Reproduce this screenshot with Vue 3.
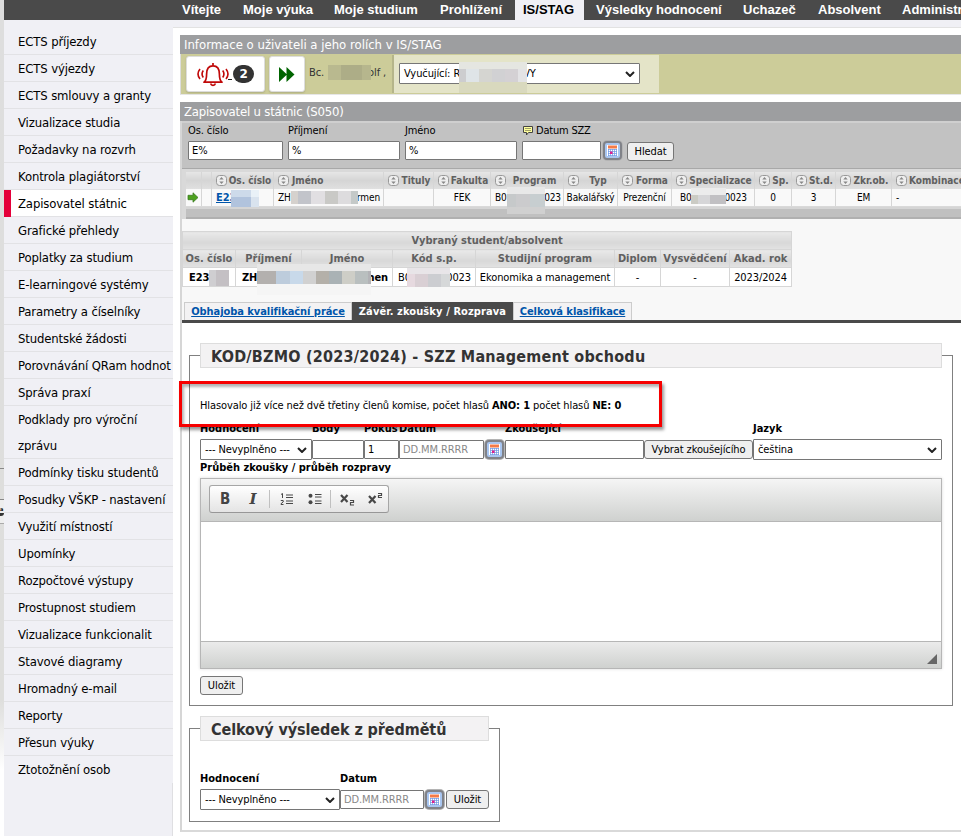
<script setup>
const nav = ['Vítejte', 'Moje výuka', 'Moje studium', 'Prohlížení', 'IS/STAG', 'Výsledky hodnocení', 'Uchazeč', 'Absolvent', 'Administrace']
const side = [
  'ECTS příjezdy', 'ECTS výjezdy', 'ECTS smlouvy a granty', 'Vizualizace studia', 'Požadavky na rozvrh',
  'Kontrola plagiátorství', 'Zapisovatel státnic', 'Grafické přehledy', 'Poplatky za studium', 'E-learningové systémy',
  'Parametry a číselníky', 'Studentské žádosti', 'Porovnávání QRam hodnot', 'Správa praxí', 'Podklady pro výroční zprávu',
  'Podmínky tisku studentů', 'Posudky VŠKP - nastavení', 'Využití místností', 'Upomínky', 'Rozpočtové výstupy',
  'Prostupnost studiem', 'Vizualizace funkcionalit', 'Stavové diagramy', 'Hromadný e-mail', 'Reporty', 'Přesun výuky', 'Ztotožnění osob'
]
const columns = ['Os. číslo', 'Jméno', 'Tituly', 'Fakulta', 'Program', 'Typ', 'Forma', 'Specializace', 'Sp.', 'St.d.', 'Zkr.ob.', 'Kombinace']
</script>

<template>
  <div class="page">
    <div class="behind"><i class="seam one"></i><i class="seam two"></i><div class="knob">a</div></div>
    <nav class="top">
      <a v-for="n in nav" :key="n" :class="{ on: n === 'IS/STAG' }">{{ n }}</a>
    </nav>
    <aside class="side">
      <a v-for="s in side" :key="s" :class="{ sel: s === 'Zapisovatel státnic' }">{{ s }}</a>
      <div class="rest"></div>
    </aside>

    <main class="main">
      <div class="strip"></div>
      <div class="content">
        <h2 class="bar first">Informace o uživateli a jeho rolích v IS/STAG</h2>
        <div class="user">
          <div class="tile bell">
            <svg width="34" height="26" viewBox="0 0 34 26" fill="none" stroke="#c00808" stroke-width="1.7">
              <path d="M8 21.2c2.2-1.5 2.6-4 2.6-8.2 0-5 2.3-8.2 6.400-8.200s6.400 3.200 6.400 8.200c0 4.200.4 6.700 2.600 8.200z" stroke-linejoin="round" />
              <path d="M17 4.500V2M14.600 22.500a2.500 2.500 0 0 0 4.800 0" />
              <path d="M7.300 9.500c-1.500 2.100-1.500 4.900 0 7M4 8c-2.400 3-2.400 7 0 10M26.700 9.500c1.500 2.100 1.500 4.900 0 7M30 8c2.400 3 2.400 7 0 10" stroke-width="1.600" />
            </svg>
            <u></u><b class="count">2</b>
          </div>
          <div class="tile ff">
            <svg width="16" height="15" viewBox="0 0 16 15" fill="#006400"><path d="M0 0l8 7.500L0 15zM7.500 0l8 7.500-8 7.500z" /></svg>
          </div>
          <span class="who"><span>Bc.</span><span>olf ,</span></span>
          <div class="role">
            <div class="select"><span>Vyučující: R</span><span class="tail">VY</span><svg class="chev" viewBox="0 0 10 6"><path d="M1 1l4 4 4-4" /></svg></div>
          </div>
        </div>
        <h2 class="bar second">Zapisovatel u státnic (S050)</h2>

        <section class="panel">
          <div class="search">
            <label class="q1"><span>Os. číslo</span><input value="E%"></label>
            <label class="q2"><span>Příjmení</span><input value="%"></label>
            <label class="q2"><span>Jméno</span><input value="%"></label>
            <label class="q3"><span class="tip"><svg width="11" height="10" viewBox="0 0 11 10"><path d="M.5.500h9v6h-4l-2 2.500v-2.500h-3z" fill="#ffff9c" stroke="#444" /><path d="M2 2.500h6M2 4.500h6" stroke="#88885a" stroke-width=".8" /></svg>Datum SZZ</span><input></label>
            <div class="cal"><svg viewBox="0 0 15 15"><path d="M2 2h11v11H2z" fill="#fff" /><path d="M3 2.500h9v3H3z" fill="#f47a48" /><path d="M3 6.500h9M3 8.500h9M3 10.500h9M3 12.500h9M3.500 6v7M5.500 6v7M7.500 6v7M9.500 6v7M11.500 6v7" stroke="#6b96e4" stroke-width=".7" /><path d="M5 8.500h2.500V11H5z" fill="#e0208c" /></svg></div>
            <button>Hledat</button>
          </div>
          <div class="results">
            <div class="grid head">
              <div></div><div></div>
              <div v-for="c in columns" :key="c"><svg class="sort" viewBox="0 0 11 11"><rect x=".5" y=".5" width="10" height="10" rx="3" /><path d="M5.500 2l2.200 2.600H3.300zM5.500 9L3.300 6.400h4.400z" /></svg><span>{{ c }}</span></div>
            </div>
            <div class="grid row">
              <div class="go"><svg width="12" height="11" viewBox="0 0 12 11"><path d="M1 3.300h5V.8l5 4.700-5 4.700V7.700H1z" fill="#4da11f" stroke="#3b7b22" stroke-width=".8" /></svg></div>
              <div></div>
              <div class="link"><a>E23</a></div>
              <div class="split"><span>ZH</span><span>rmen</span></div>
              <div></div>
              <div class="mid">FEK</div>
              <div class="split prog"><span>B0</span><span>023</span></div>
              <div class="mid">Bakalářský</div>
              <div class="mid">Prezenční</div>
              <div class="split spec"><span>B0</span><span>0023</span></div>
              <div class="mid">0</div>
              <div class="mid">3</div>
              <div class="mid">EM</div>
              <div>-</div>
            </div>
            <div class="foot"></div>
          </div>

          <div class="chosen">
            <table>
              <colgroup><col class="a"><col class="b"><col class="c"><col class="d"><col class="e"><col class="f"><col class="g"><col class="h"></colgroup>
              <tbody>
                <tr><th colspan="8">Vybraný student/absolvent</th></tr>
                <tr class="names"><th>Os. číslo</th><th>Příjmení</th><th>Jméno</th><th>Kód s.p.</th><th>Studijní program</th><th>Diplom</th><th>Vysvědčení</th><th>Akad. rok</th></tr>
                <tr class="vals"><td class="l"><b>E23</b></td><td class="l"><b>ZH.</b></td><td class="r"><b>men</b></td><td><div class="split"><span>B0</span><span>0023</span></div></td><td>Ekonomika a management</td><td>-</td><td>-</td><td>2023/2024</td></tr>
              </tbody>
            </table>
            <div class="tabs">
              <a class="t1"><span>Obhajoba kvalifikační práce</span></a><a class="t2 active">Závěr. zkoušky / Rozprava</a><a class="t3"><span>Celková klasifikace</span></a>
            </div>
          </div>

          <div class="work">
            <section class="box exam">
              <h3>KOD/BZMO (2023/2024) - SZZ Management obchodu</h3>
              <p class="vote">Hlasovalo již více než dvě třetiny členů komise, počet hlasů <b>ANO: 1</b> počet hlasů <b>NE: 0</b></p>
              <div class="fields">
                <b>Hodnocení</b><b>Body</b><b>Pokus</b><b>Datum</b><b></b><b>Zkoušející</b><b></b><b>Jazyk</b>
                <div class="select"><span>--- Nevyplněno ---</span><svg class="chev" viewBox="0 0 10 6"><path d="M1 1l4 4 4-4" /></svg></div>
                <input><input value="1"><input placeholder="DD.MM.RRRR">
                <div class="cal"><svg viewBox="0 0 15 15"><path d="M2 2h11v11H2z" fill="#fff" /><path d="M3 2.500h9v3H3z" fill="#f47a48" /><path d="M3 6.500h9M3 8.500h9M3 10.500h9M3 12.500h9M3.500 6v7M5.500 6v7M7.500 6v7M9.500 6v7M11.500 6v7" stroke="#6b96e4" stroke-width=".7" /><path d="M5 8.500h2.500V11H5z" fill="#e0208c" /></svg></div>
                <input><button>Vybrat zkoušejícího</button>
                <div class="select"><span>čeština</span><svg class="chev" viewBox="0 0 10 6"><path d="M1 1l4 4 4-4" /></svg></div>
              </div>
              <b class="course">Průběh zkoušky / průběh rozpravy</b>
              <div class="editor">
                <div class="tools">
                  <div class="group">
                    <span class="tb">B</span><span class="tb it">I</span><i></i>
                    <svg class="ic" width="14" height="14" viewBox="0 0 14 14"><path d="M6 3h7M6 5.500h7M6 9h7M6 11.500h7" stroke="#484848" stroke-width="1.200" /><path d="M1 2.500l1.500-1V6M.8 8.500h2.400V10L1 11.700v.8h2.500" fill="none" stroke="#484848" /></svg>
                    <svg class="ic" width="14" height="14" viewBox="0 0 14 14"><path d="M7 2.500h6.500M7 5h6.500M7 9h6.500M7 11.500h6.500" stroke="#484848" stroke-width="1.200" /><circle cx="2.500" cy="3.700" r="2" fill="#484848" /><circle cx="2.500" cy="10.300" r="2" fill="#484848" /></svg><i></i>
                    <svg class="ic" width="15" height="14" viewBox="0 0 15 14" fill="none" stroke="#484848"><path d="M1 3l6.500 7M7.500 3L1 10" stroke-width="2.200" /><path d="M10 8.500h3.500v2H10.500v2.500H14" stroke-width="1.200" /></svg>
                    <svg class="ic" width="15" height="14" viewBox="0 0 15 14" fill="none" stroke="#484848"><path d="M1 4l6.500 7M7.500 4L1 11" stroke-width="2.200" /><path d="M10 1.500h3.500v2H10.500v2H14" stroke-width="1.200" /></svg>
                  </div>
                </div>
                <div class="canvas"></div>
                <div class="status"></div>
              </div>
              <button class="save">Uložit</button>
            </section>

            <section class="box total">
              <h3>Celkový výsledek z předmětů</h3>
              <div class="fields2">
                <b>Hodnocení</b><b>Datum</b><b></b><b></b>
                <div class="select"><span>--- Nevyplněno ---</span><svg class="chev" viewBox="0 0 10 6"><path d="M1 1l4 4 4-4" /></svg></div>
                <input placeholder="DD.MM.RRRR">
                <div class="cal"><svg viewBox="0 0 15 15"><path d="M2 2h11v11H2z" fill="#fff" /><path d="M3 2.500h9v3H3z" fill="#f47a48" /><path d="M3 6.500h9M3 8.500h9M3 10.500h9M3 12.500h9M3.500 6v7M5.500 6v7M7.500 6v7M9.500 6v7M11.500 6v7" stroke="#6b96e4" stroke-width=".7" /><path d="M5 8.500h2.500V11H5z" fill="#e0208c" /></svg></div>
                <button>Uložit</button>
              </div>
            </section>
          </div>
        </section>
      </div>
    </main>

    <div class="mark"></div>
    <i class="mask m1"></i><i class="mask m2"></i><i class="mask m3"></i><i class="mask m4"></i><i class="mask m5"></i>
    <i class="mask m6"></i><i class="mask m7"></i><i class="mask m8"></i><i class="mask m9"></i>
  </div>
</template>

<style>
html, body { overflow: hidden; background: #fff; }
</style>

<style scoped>
* { box-sizing: border-box; }
.page {
  position: relative; width: 961px; height: 836px; overflow: hidden; background: #fff; color: #000;
  display: grid; grid-template-columns: 4px 169px 788px; grid-template-rows: 20px 816px;
  font: 11px/14px "DejaVu Sans Condensed", "DejaVu Sans", sans-serif; font-stretch: condensed; letter-spacing: -.1px;
}
.behind { grid-row: 1 / 3; background: linear-gradient(#dedede, #dededc 700px, #fff 770px); display: flex; flex-direction: column; overflow: hidden; }
.seam { height: 1px; background: #888; margin-top: 468px; flex: none; }
.seam.two { margin-top: 30px; }
.knob { width: 4px; height: 24px; background: #eee; border-bottom: 1px solid #aaa; font: bold 5px/8px "DejaVu Sans"; padding-top: 5px; }
.knob::after { content: ""; display: block; width: 4px; height: 3px; background: #333; border-radius: 0 0 3px 0; }

.top { grid-column: 2 / 4; background: #4a4a4a; padding-left: 170px; display: grid; grid-template-columns: 61px 91px 106px 83px 73px 147px 75px 84px 120px; font: bold 13px/20px "Liberation Sans", sans-serif; color: #fff; letter-spacing: 0; }
.top a { padding-left: 8px; white-space: nowrap; height: 20px; }
.top a.on { background: #f0f0f5; color: #000; margin: 0 4px 0 0; }

.side { background: #f0f0f5; padding-top: 8px; display: flex; flex-direction: column; }
.side a { font-size: 13px; line-height: 26px; letter-spacing: -.14px; box-shadow: inset 0 -1px #e2e2e5; padding: 1px 0 0 14px; min-height: 27px; }
.side a.sel { background: #fff; border-left: 7px solid #e4003a; padding-left: 7px; }
.side a:nth-child(27) { box-shadow: none; min-height: 26px; }
.side .rest { flex: 1; border-right: 1px solid #dfdfe2; }

.main { min-width: 0; overflow: hidden; }
.strip { height: 8px; background: #f0f0f5; border-bottom: 1px solid #e2e2e2; }
.content { padding: 7px 0 0 7px; }
.bar { margin: 0; height: 19px; background: #9d9ea0; color: #fff; font-size: 13px; font-weight: normal; line-height: 20px; padding-left: 4px; letter-spacing: 0; }
.second { letter-spacing: -.2px; }
.user { height: 41px; background: #cccc99; border-bottom: 1px solid #e6e6e6; border-left: 1px solid #ddd; padding: 1px 0 0 5px; display: flex; margin-bottom: 7px; }
.tile { height: 36px; margin-top: 1px; background: #fff; border: 1px solid #ddd; border-radius: 3px; box-shadow: 0 1px 2px rgba(0,0,0,.15); display: flex; align-items: center; }
.bell { width: 79px; padding-left: 9px; margin-right: 4px; }
.bell u { width: 4px; height: 1px; background: #222; margin-top: 10px; margin-left: -2px; }
.count { width: 21px; height: 18px; border-radius: 9px; background: #333; color: #fff; text-align: center; font: bold 12px/18px "DejaVu Sans"; margin-left: 1px; }
.ff { width: 36px; justify-content: center; }
.who { width: 87px; padding: 11px 0 0 4px; display: flex; gap: 44px; color: #333; white-space: pre; }
.role { width: 267px; height: 38px; background: #e4e4c8; border-left: 2px solid #b5b58a; padding: 8px 0 0 5px; }
.role .select { width: 241px; height: 21px; }
.tail { margin-left: 63px; }

.select { height: 21px; background: #fff; border: 1px solid #767676; border-radius: 1px; padding: 0 4px 0 4px; display: flex; align-items: center; white-space: nowrap; line-height: 19px; }
.chev { width: 10px; height: 6px; margin-left: auto; flex: none; fill: none; stroke: #222; stroke-width: 2; }
input { display: block; min-width: 0; width: 100%; height: 19px; border: 1px solid #767676; border-radius: 1px; background: #fff; padding: 0 3px; font: inherit; color: #000; letter-spacing: inherit; outline: 0; margin: 0; }
input::placeholder { color: #888; opacity: 1; }
button { height: 19px; border: 1px solid #767676; border-radius: 3px; background: #efefef; color: #000; font: inherit; letter-spacing: inherit; padding: 0; margin: 0; white-space: nowrap; }
.cal { width: 19px; height: 19px; border: 2px solid #808288; border-radius: 4px; background: #a9c6f0; box-shadow: 0 0 0 1px #b4b4b4; }
.cal svg { display: block; width: 15px; height: 15px; }

.panel { border-left: 2px solid #d6d6d6; height: 711px; border-bottom: 2px solid #d9d9d9; }
.search { height: 48px; background: #c2c2c2; border-top: 2px solid #cfcfcf; border-bottom: 1px solid #a8a8a8; padding: 1px 0 0 6px; display: flex; }
.search label { margin-right: 5px; }
.search label > span { display: block; height: 17px; line-height: 14px; white-space: nowrap; }
.search .tip { display: flex; gap: 2px; padding-left: 1px; letter-spacing: -.2px; }
.search .tip svg { margin-top: 2px; flex: none; }
.q1 { width: 95px; } .q2 { width: 112px; } .search .q3 { width: 79px; margin-right: 2px; }
.search .cal { margin-top: 17px; width: 19px; }
.search button { margin: 18px 0 0 5px; width: 47px; }

.results { height: 50px; background: #d9d9d9; padding-top: 3px; }
.grid { display: grid; grid-template-columns: 16px 10px 62px 110px 50px 57px 73px 54px 54px 83px 37px 44px 56px 90px; padding-left: 4px; width: 830px; }
.grid > div { border-right: 1px solid #d6d6d6; white-space: nowrap; overflow: hidden; height: 17px; line-height: 17px; }
.head > div { background: linear-gradient(#e6e6e6, #d5d5d5 50%, #e0e0e0); color: #606060; font-weight: bold; font-size: 10px; display: flex; align-items: center; padding: 0 1px 0 4px; }
.head > div span { flex: 1; text-align: center; padding-left: 1px; }
.head > div:nth-child(4) span { text-align: left; padding-left: 3px; }
.head > div:nth-child(14) span { text-align: left; padding-left: 2px; }
.head > div:nth-child(-n+2) { padding: 0; }
.head { letter-spacing: 0; }
.sort { width: 11px; height: 11px; flex: none; fill: #eee; stroke: #999; }
.sort path { fill: #888; stroke: none; }
.row > div { background: #f9f9f9; padding: 0 3px 0 4px; font-size: 10px; }
.row .mid { text-align: center; padding: 0; }
.row .go { padding: 3px 1px 0; line-height: 0; }
.link a { color: #0055aa; font-weight: bold; font-size: 11px; text-decoration: underline; }
.split { display: flex; justify-content: space-between; }
.row .spec { padding: 0 7px 0 8px; }
.row .prog { padding: 0 2px 0 4px; }
.foot { height: 12px; margin: 1px 0 0 4px; background: #c0c0c0; border-top: 2px solid #d5d5d5; border-bottom: 2px solid #b0b0b0; }

.chosen { background: #f8f8f8; height: 104px; padding-top: 12px; border-bottom: 3px solid #4a4a4a; display: flex; flex-direction: column; }
table { border-collapse: collapse; table-layout: fixed; width: 610px; }
.a { width: 53px; } .b { width: 66px; } .c { width: 91px; } .d { width: 83px; } .e { width: 139px; } .f { width: 46px; } .g { width: 69px; } .h { width: 62px; }
tr { height: 18px; }
th, td { border: 1px solid #d6d6d6; padding: 0; line-height: 17px; height: 18px; text-align: center; white-space: nowrap; overflow: hidden; }
th { background: linear-gradient(#e9e9e9, #d8d8d8 60%, #e2e2e2); color: #606060; letter-spacing: 0; padding-top: 1px; line-height: 16px; }
.vals td { background: #fff; height: 19px; }
td.l { text-align: left; padding-left: 6px; } td.r { text-align: right; padding-right: 4px; }
td .split { padding: 0 4px 0 5px; }
.tabs { display: flex; margin-top: auto; padding-left: 2px; height: 18px; font-weight: bold; line-height: 18px; white-space: nowrap; letter-spacing: -.05px; }
.tabs a { background: #f3f2f3; border: 1px solid #ccc; border-bottom: 0; color: #0055aa; text-align: center; }
.tabs span { text-decoration: underline; }
.tabs .active { background: #4a4a4a; border-color: #4a4a4a; color: #fff; letter-spacing: .1px; }
.t1 { width: 168px; } .t2 { width: 161px; } .t3 { width: 119px; }

.work { background: #fff; height: 507px; padding: 32px 0 0 7px; }
.box { border: 1px solid #808080; padding: 0 10px; }
.exam { width: 764px; height: 351px; margin-bottom: 22px; }
.total { width: 311px; height: 94px; }
h3 { margin: -13px 0 0; height: 25px; background: #f3f2f3; border: 1px solid #ddd; padding-left: 10px; font-size: 16px; line-height: 25px; color: #333; white-space: nowrap; letter-spacing: .23px; }
.total h3 { letter-spacing: -.08px; }
.vote { margin: 30px 0 0; line-height: 15px; white-space: nowrap; }
.fields { margin-top: 8px; display: grid; grid-template-columns: 112px 52px 35px 85px 21px 139px 109px 189px; grid-template-rows: 18px 21px; }
.fields > b, .fields2 > b { line-height: 15px; white-space: nowrap; letter-spacing: 0; }
.fields > input, .fields > button { margin-top: 1px; }
.fields .cal, .fields2 .cal { margin: 1px 0 0 1px; }
.course { display: block; line-height: 14px; margin-top: 1px; letter-spacing: 0; }
.editor { margin-top: 3px; height: 191px; border: 1px solid #b6b6b6; box-shadow: 0 0 3px rgba(0,0,0,.15); display: flex; flex-direction: column; }
.tools { height: 43px; background: linear-gradient(#f5f5f5, #cfd1cf); border-bottom: 1px solid #b6b6b6; padding: 6px 8px; }
.group { width: 180px; height: 28px; border: 1px solid #a6a6a6; border-bottom-color: #979797; border-radius: 3px; background: linear-gradient(#fff, #e4e4e4); display: flex; align-items: center; padding-left: 1px; }
.group > i { width: 1px; height: 18px; background: #c0c0c0; margin: 0 2px; flex: none; }
.tb { width: 28px; flex: none; text-align: center; font: bold 15px/26px "DejaVu Sans Condensed", "DejaVu Sans"; color: #444; }
.it { font: italic bold 15px/26px "DejaVu Serif"; }
.ic { margin: 0 6px 0 8px; flex: none; }
.ic:nth-last-child(-n+2) { margin: 0 6px 0 7px; }
.canvas { flex: 1; background: #fff; }
.status { height: 27px; border-top: 1px solid #b6b6b6; background: linear-gradient(#ebebeb, #cfd1cf); display: flex; justify-content: flex-end; align-items: flex-end; padding: 0 4px 4px; }
.status::after { content: ""; border-left: 10px solid transparent; border-bottom: 10px solid #666; }
.save { width: 43px; margin-top: 7px; display: block; }
.fields2 { margin-top: 30px; display: grid; grid-template-columns: 140px 84px 22px 43px; grid-template-rows: 18px 21px; }
.fields2 > input, .fields2 > button { margin-top: 1px; }

.mark { position: absolute; left: 179px; top: 381px; width: 483px; height: 46px; border: 3px solid #f60000; box-shadow: 2px 3px 3px rgba(0,0,0,.4), inset 2px 3px 3px rgba(0,0,0,.3); }
.mask { position: absolute; }
.m1 { left: 328px; top: 65px; width: 43px; height: 15px; background: linear-gradient(90deg, #b9b98f 30%, #adad87 30% 80%, #b6b68d 80%); }
.m2 { left: 459px; top: 62px; width: 68px; height: 31px; background: linear-gradient(90deg, #cdcdcf 10%, #dfe4e7 10% 29%, #d5d5d1 29% 48%, #d1d1d3 48% 67%, #d4d1d4 67% 87%, #e3e3e5 87%) 0 7px / 100% 13px no-repeat, linear-gradient(#e5e6e1 64%, #d9d9be 64%); }
.m3 { left: 231px; top: 190px; width: 28px; height: 17px; background: linear-gradient(90deg, #b1c3dd 70%, #d9e3ee 70%) 0 7px / 100% 10px no-repeat, linear-gradient(90deg, #cddaea 70%, #e9f1f7 70%); }
.m4 { left: 291px; top: 191px; width: 67px; height: 13px; background: linear-gradient(90deg, #d5d1cd 10%, #c2c4ca 10% 30%, #e1dfe2 30% 50%, #c9c9c6 50% 70%, #dddcde 70% 90%, #c4c9c8 90%); }
.m5 { left: 507px; top: 187px; width: 38px; height: 27px; background: linear-gradient(#e8e8e8 7px, transparent 7px 20px, #d0d0d0 20px), linear-gradient(90deg, #c6c9ca 25%, #cbcbcd 25% 60%, #c7ced0 60%); }
.m6 { left: 691px; top: 188px; width: 35px; height: 16px; background: linear-gradient(#ececec 7px, transparent 7px), linear-gradient(90deg, #cbcbc4 20%, #d6d6d8 20% 55%, #c1c0c3 55%); }
.m7 { left: 209px; top: 270px; width: 20px; height: 16px; background: linear-gradient(90deg, #cfced1 35%, #c4c0c4 35%); }
.m8 { left: 257px; top: 264px; width: 114px; height: 31px; background: linear-gradient(90deg, #b3b0ae 17%, #bdccdc 17% 29%, #c8d9ea 29% 40%, #d1d1d1 40% 52%, #b4b0a9 52% 63%, #aab2b5 63% 75%, #cecec7 75% 86%, #b9bfbf 86% 97%, #b2b2b6 97%) 0 7px / 100% 13px no-repeat, linear-gradient(#e7e7e7 7px, #f5f5f5 7px); }
.m9 { left: 407px; top: 268px; width: 43px; height: 19px; background: linear-gradient(#e8e5e8 6px, transparent 6px), linear-gradient(90deg, #e6d9df 18%, #d9cfd4 18% 48%, #cccdd1 48% 78%, #d6d8d9 78%); }
</style>
